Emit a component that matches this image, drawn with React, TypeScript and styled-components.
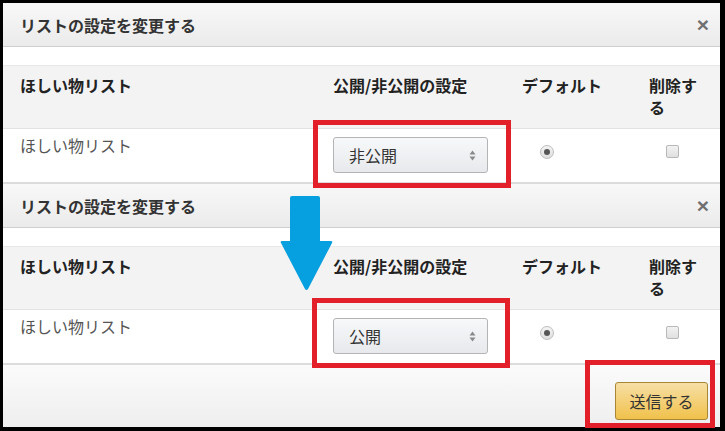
import React from "react";
import styled, { createGlobalStyle } from "styled-components";

const GlobalStyle = createGlobalStyle`
  html, body {
    margin: 0;
    padding: 0;
    background: #000;
  }
  body {
    font-family: "Noto Sans CJK JP", "Noto Sans", sans-serif;
  }
`;

type DialogProps = {
  visibility: string;
  withFooter?: boolean;
};

const SelectArrows = () => (
  <svg width="7" height="11" viewBox="0 0 7 11">
    <path d="M3.5 0.5 L6.5 4.5 L0.5 4.5 Z" fill="#8a8a8a" />
    <path d="M3.5 10.5 L6.5 6.5 L0.5 6.5 Z" fill="#8a8a8a" />
  </svg>
);

const SettingsDialog: React.FC<DialogProps> = ({ visibility, withFooter }) => {
  return (
    <Panel>
      <PanelHeader>
        <Title>リストの設定を変更する</Title>
        <Close>×</Close>
      </PanelHeader>
      <Spacer />
      <ListTable>
        <HeadCell>ほしい物リスト</HeadCell>
        <HeadCell>公開/非公開の設定</HeadCell>
        <HeadCell>デフォルト</HeadCell>
        <HeadCell>削除する</HeadCell>

        <BodyCell>ほしい物リスト</BodyCell>
        <BodyCell>
          <SelectBox>
            <span>{visibility}</span>
            <SelectArrows />
          </SelectBox>
        </BodyCell>
        <BodyCell>
          <Radio />
        </BodyCell>
        <BodyCell>
          <Checkbox />
        </BodyCell>
      </ListTable>
      {withFooter && (
        <Footer>
          <SubmitButton>送信する</SubmitButton>
        </Footer>
      )}
    </Panel>
  );
};

const App: React.FC = () => {
  return (
    <>
      <GlobalStyle />
      <Frame>
        <SettingsDialog visibility="非公開" />
        <SettingsDialog visibility="公開" withFooter />

        {/* annotations drawn over the screenshot */}
        <Callout $left={313} $top={120} $width={198} $height={68} />
        <Callout $left={312} $top={298} $width={198} $height={70} />
        <Callout $left={585} $top={360} $width={130} $height={68} />
        <DownArrow width="53" height="95" viewBox="0 0 53 95">
          <path
            d="M12 0 H38 Q40 0 40 2 V45 H51 Q53 45 52 47 L28 93 Q26.5 95 25 93 L1 47 Q0 45 2 45 H10 V2 Q10 0 12 0 Z"
            fill="#069fe0"
          />
        </DownArrow>
      </Frame>
    </>
  );
};

export default App;

const Frame = styled.div`
  position: relative;
  box-sizing: border-box;
  width: 725px;
  height: 431px;
  padding: 3px 5px 3px 3px;
  background: #000;
  overflow: hidden;
`;

const Panel = styled.section`
  display: flex;
  flex-direction: column;
  background: #fff;
  border-bottom: 2px solid #dcdcdc;

  & + & {
    border-bottom: none;
  }
`;

const PanelHeader = styled.div`
  display: flex;
  align-items: center;
  justify-content: space-between;
  height: 43px;
  padding: 0 11px 0 17px;
  background: linear-gradient(#f8f8f8, #ebebeb);
  border-bottom: 1px solid #cfcfcf;
`;

const Title = styled.h4`
  margin: 0;
  font-size: 16px;
  font-weight: 700;
  color: #333;
`;

const Close = styled.span`
  font-family: "Liberation Sans", Arial, sans-serif;
  font-size: 21px;
  font-weight: 700;
  color: #707070;
  line-height: 1;
`;

const Spacer = styled.div`
  height: 18px;
`;

const ListTable = styled.div`
  display: grid;
  grid-template-columns: 313px 189px 127px 1fr;
  font-size: 16px;
`;

const HeadCell = styled.div`
  padding: 8px 17px 10px;
  line-height: 22px;
  font-weight: 700;
  color: #222;
  background: #f3f3f3;
  border-top: 1px solid #e8e8e8;
  border-bottom: 1px solid #e2e2e2;
`;

const BodyCell = styled.div`
  height: 53px;
  box-sizing: border-box;
  padding: 8px 17px 0;
  line-height: 16px;
  color: #555;
`;

const SelectBox = styled.div`
  display: flex;
  align-items: center;
  justify-content: space-between;
  box-sizing: border-box;
  width: 155px;
  height: 36px;
  padding: 0 11px 0 15px;
  border: 1px solid #b4b4b4;
  border-radius: 3px;
  background: linear-gradient(#f7f8fa, #e7e9ec);
  color: #333;
  font-size: 16px;
`;

const Radio = styled.span`
  display: flex;
  align-items: center;
  justify-content: center;
  box-sizing: border-box;
  width: 14px;
  height: 14px;
  margin: 8px 0 0 18px;
  border: 1px solid #bdbdbd;
  border-radius: 50%;
  background: linear-gradient(#f4f4f4, #dedede);

  &::after {
    content: "";
    width: 6px;
    height: 6px;
    border-radius: 50%;
    background: #555;
  }
`;

const Checkbox = styled.span`
  display: block;
  box-sizing: border-box;
  width: 13px;
  height: 13px;
  margin: 8px 0 0 17px;
  border: 1px solid #b8b8b8;
  border-radius: 2px;
  background: linear-gradient(#f2f2f2, #e0e0e0);
`;

const Footer = styled.div`
  display: flex;
  justify-content: flex-end;
  align-items: flex-start;
  height: 64px;
  box-sizing: border-box;
  padding: 17px 12px 0;
  border-top: 2px solid #dcdcdc;
  background: linear-gradient(#fbfbfb, #eeeeee);
`;

const SubmitButton = styled.button`
  width: 93px;
  height: 38px;
  padding: 0;
  border: 1px solid #a88734;
  border-radius: 3px;
  background: linear-gradient(#f7dfa5, #f0c14b);
  font-family: "Noto Sans CJK JP", sans-serif;
  font-size: 16px;
  color: #333;
`;

const Callout = styled.div<{ $left: number; $top: number; $width: number; $height: number }>`
  position: absolute;
  left: ${(p) => p.$left}px;
  top: ${(p) => p.$top}px;
  width: ${(p) => p.$width}px;
  height: ${(p) => p.$height}px;
  box-sizing: border-box;
  border: 5px solid #e3202a;
  pointer-events: none;
`;

const DownArrow = styled.svg`
  position: absolute;
  left: 280px;
  top: 196px;
`;
